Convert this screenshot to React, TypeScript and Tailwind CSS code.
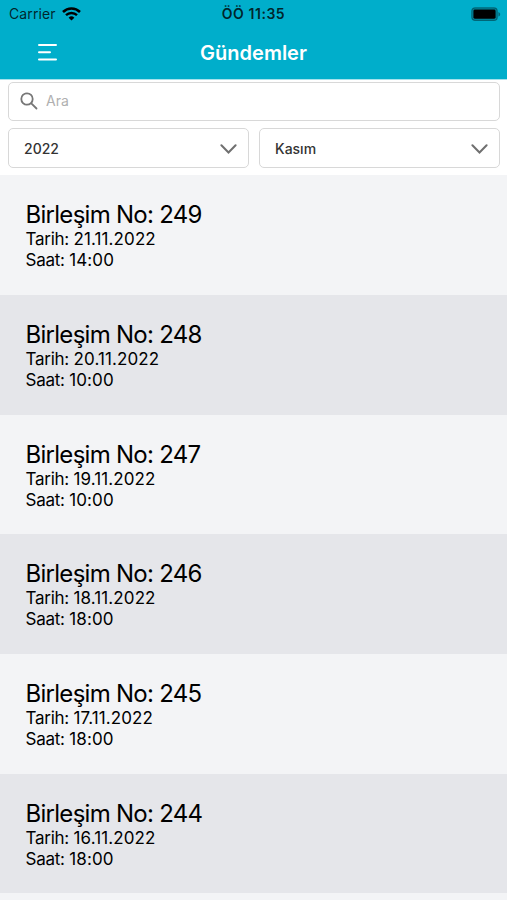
import type { ReactNode } from "react";

const meetings = [
  { no: 249, date: "21.11.2022", time: "14:00" },
  { no: 248, date: "20.11.2022", time: "10:00" },
  { no: 247, date: "19.11.2022", time: "10:00" },
  { no: 246, date: "18.11.2022", time: "18:00" },
  { no: 245, date: "17.11.2022", time: "18:00" },
  { no: 244, date: "16.11.2022", time: "18:00" },
];

const StatusBar = () => (
  <div className="grid h-7 grid-cols-3 items-center px-[7px] text-sm text-black/80">
    <div className="flex items-center gap-[6px] pl-[2px]">
      <span className="tracking-[0.1px]">Carrier</span>
      <svg className="h-[14px] w-[19px]" viewBox="0 0 19 14" fill="none" stroke="#000" aria-hidden="true">
        <path d="M1 5a12.2 12.2 0 0117 0" strokeWidth={2.6} />
        <path d="M4 8.2a7.9 7.9 0 0111 0" strokeWidth={2.4} />
        <path d="M9.5 13.6L6.6 10.7a4.2 4.2 0 015.8 0z" fill="#000" stroke="none" />
      </svg>
    </div>
    <span className="text-center font-semibold tracking-[0.55px]">ÖÖ 11:35</span>
    <svg className="-mr-[1px] h-[15px] w-[30px] justify-self-end" viewBox="0 0 30 15" aria-hidden="true">
      <rect x="0.8" y="0.8" width="25.4" height="12.6" rx="3.2" fill="#000" fillOpacity="0.2" stroke="#000" strokeOpacity="0.35" strokeWidth="1.2" />
      <rect x="2.4" y="2.5" width="22.2" height="9.2" rx="1.4" fill="#000" />
      <path d="M27.4 5v4.6c1.1-.4 1.8-1.3 1.8-2.3s-.7-1.9-1.8-2.3z" fill="#000" fillOpacity="0.4" />
    </svg>
  </div>
);

const Header = () => (
  <header className="h-[79px] bg-[#00aecb]">
    <StatusBar />
    <div className="grid h-12 grid-cols-[1fr_auto_1fr] items-center">
      <button className="ml-[37px] w-5" aria-label="Menü">
        <svg className="h-5 w-5" viewBox="0 0 20 20" stroke="#fff" strokeWidth={2} strokeLinecap="round" aria-hidden="true">
          <path d="M2 3h17M2 10.2h11M2 17.4h17" />
        </svg>
      </button>
      <h1 className="pt-px text-xl font-semibold text-white">Gündemler</h1>
    </div>
  </header>
);

const Select = ({ children }: { children: ReactNode }) => (
  <button className="flex h-10 flex-1 items-center justify-between rounded-[5px] border border-[#d8d8d8] bg-white pl-[15px] pr-[11px] pt-px text-sm font-medium text-[#333]">
    {children}
    <svg className="h-[10px] w-[17px]" viewBox="0 0 17 10" fill="none" stroke="#707070" strokeWidth={2} strokeLinecap="round" aria-hidden="true">
      <path d="M1.4 1.2l7.1 7.3 7.1-7.3" />
    </svg>
  </button>
);

const Field = ({ label, value }: { label: string; value: string }) => (
  <p className="text-[17px] leading-[21px]">
    <span className="tracking-[-0.25px]">{label}: </span>
    <span className="tracking-[0.1px]">{value}</span>
  </p>
);

export default function App() {
  return (
    <div className="h-[900px] w-[507px] overflow-hidden bg-[#f3f4f6] font-['Inter',sans-serif]">
      <Header />
      <div className="h-[96.3px] space-y-[7px] border-t border-[#a5e2ec] bg-white pl-2 pr-[7px] pt-[2px]">
        <label className="flex h-[39px] items-center rounded-[5px] border border-[#d8d8d8] pb-px pl-[11px]">
          <svg className="h-[18px] w-[18px]" viewBox="0 0 18 18" fill="none" stroke="#777" strokeWidth={1.8} strokeLinecap="round" aria-hidden="true">
            <circle cx="7" cy="7" r="5.7" />
            <path d="M11.3 11.3l5.2 5.2" />
          </svg>
          <input className="ml-2 flex-1 text-sm outline-none placeholder:text-[#b0b0b0]" type="text" placeholder="Ara" />
        </label>
        <div className="flex gap-[10px]">
          <Select>2022</Select>
          <Select>Kasım</Select>
        </div>
      </div>
      <ul>
        {meetings.map((meeting) => (
          <li key={meeting.no} className="h-[119.7px] pl-[25.5px] pt-[25px] text-black odd:bg-[#f3f4f6] even:bg-[#e5e6ea]">
            <h2 className="text-2xl leading-[29px] tracking-[-0.72px]">Birleşim No: {meeting.no}</h2>
            <Field label="Tarih" value={meeting.date} />
            <Field label="Saat" value={meeting.time} />
          </li>
        ))}
      </ul>
    </div>
  );
}
